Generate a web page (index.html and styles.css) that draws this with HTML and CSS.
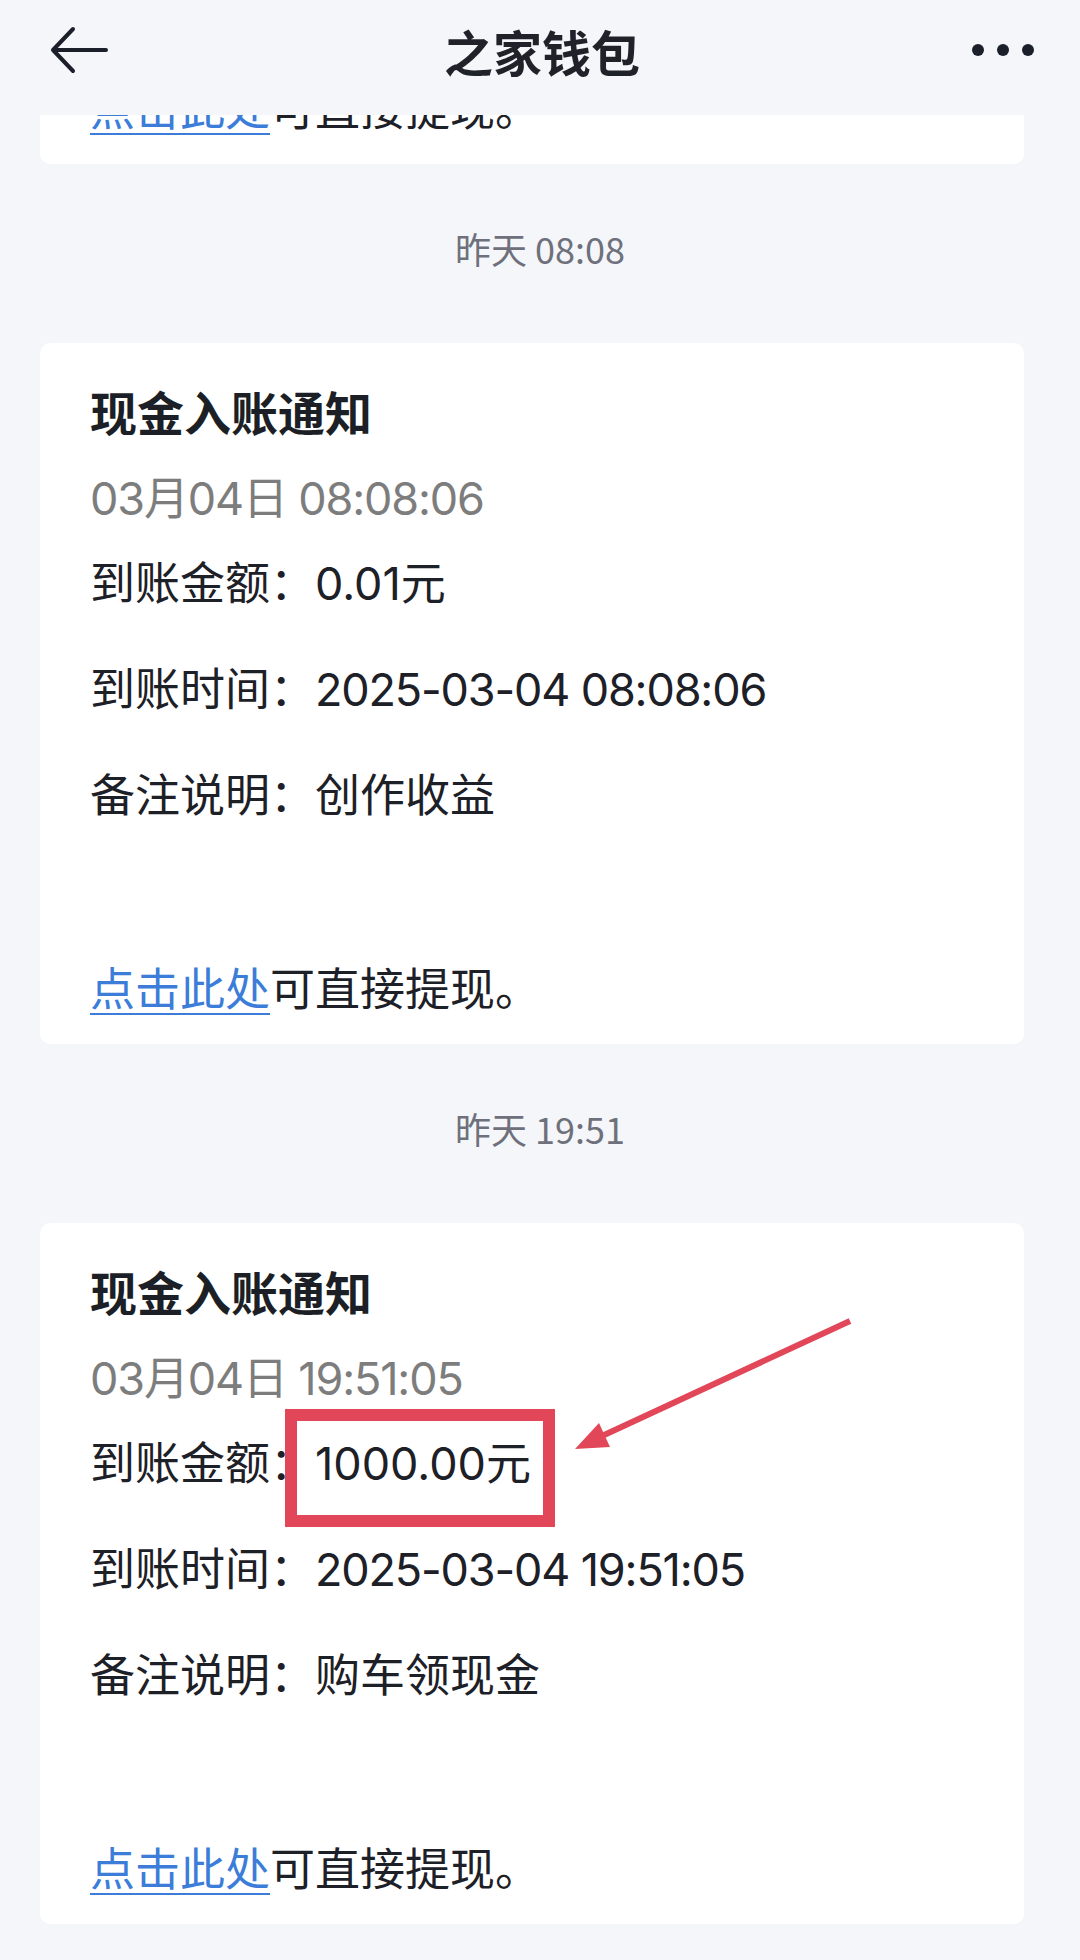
FILE: index.html
```html
<!DOCTYPE html>
<html lang="zh-CN">
<head>
  <meta charset="UTF-8" />
  <meta name="viewport" content="width=device-width, initial-scale=1.0"/>
  <title>之家钱包</title>
  <link rel="stylesheet" href="styles.css">
</head>
<body>

  <!-- Top bar -->
  <header class="topbar">
    <div class="side">
      <svg class="back" width="58" height="48" viewBox="0 0 58 48">
        <path d="M3 24 H56 M23 3 L3 24 L23 45" fill="none" stroke="#1b1f2a" stroke-width="4" stroke-linecap="round" stroke-linejoin="round"/>
      </svg>
    </div>
    <h1>之家钱包</h1>
    <div class="side right">
      <div class="more"><span></span><span></span><span></span></div>
    </div>
  </header>

  <!-- Message list -->
  <main class="feed">
    <div class="feed-inner">

      <div class="card card-cut">
        <p class="row link-row"><a href="#">点击此处</a>可直接提现。</p>
      </div>

      <div class="time">昨天 08:08</div>

      <div class="card">
        <h2>现金入账通知</h2>
        <p class="date">03月04日 08:08:06</p>
        <p class="row first">到账金额：<span class="value">0.01元</span></p>
        <p class="row">到账时间：<span class="num">2025-03-04 08:08:06</span></p>
        <p class="row">备注说明：创作收益</p>
        <p class="row link-row"><a href="#">点击此处</a>可直接提现。</p>
      </div>

      <div class="time">昨天 19:51</div>

      <div class="card marked-card">
        <h2>现金入账通知</h2>
        <p class="date">03月04日 19:51:05</p>
        <p class="row first">到账金额：<span class="value marked">1000.00元</span></p>
        <p class="row">到账时间：<span class="num">2025-03-04 19:51:05</span></p>
        <p class="row">备注说明：购车领现金</p>
        <p class="row link-row"><a href="#">点击此处</a>可直接提现。</p>

        <!-- annotation arrow -->
        <svg class="arrow" width="984" height="701" viewBox="0 0 984 701">
          <line x1="810" y1="98" x2="562" y2="213" stroke="#e24759" stroke-width="6"/>
          <polygon points="535,226 570,224 559,200" fill="#e24759"/>
        </svg>
      </div>

    </div>
  </main>

</body>
</html>
```

FILE: styles.css
```css
* {
  box-sizing: border-box;
}

body {
  margin: 0;
  width: 1080px;
  height: 1960px;
  overflow: hidden;
  background: #f5f6fa;
  font-family: Inter, "Noto Sans CJK SC", sans-serif;
  color: #1d2027;
}

.topbar {
  height: 115px;
  padding: 0 46px 15px 50px;
  display: flex;
  align-items: center;
  background: #f5f6fa;
  position: relative;
  z-index: 2;
}

.topbar .side {
  width: 140px;
  display: flex;
  align-items: center;
}

.topbar .side.right {
  justify-content: flex-end;
}

.back {
  display: block;
}

.topbar h1 {
  flex: 1;
  margin: 0;
  text-align: center;
  font-family: "Noto Sans CJK SC", sans-serif;
  font-size: 49px;
  font-weight: 700;
  color: #1f2229;
}

.more {
  display: flex;
  gap: 13px;
}

.more span {
  width: 12px;
  height: 12px;
  border-radius: 50%;
  background: #1b1f2a;
}

.feed {
  height: 1845px;
  overflow: hidden;
}

.feed-inner {
  margin-top: -35px;
}

.card {
  margin: 0 56px 0 40px;
  background: #fff;
  border-radius: 10px;
  padding: 38px 48px 24px 50px;
  position: relative;
}

.card-cut {
  padding-top: 0;
  border-radius: 0 0 10px 10px;
}

.card h2 {
  margin: 0;
  font-family: "Noto Sans CJK SC", sans-serif;
  font-size: 47px;
  font-weight: 700;
  line-height: 60px;
  color: #1c1f26;
}

.card p {
  margin: 0;
  font-size: 45px;
  line-height: 60px;
}

.card .date {
  margin-top: 28px;
  color: #7d7d7d;
  letter-spacing: -1.15px;
}

.num {
  letter-spacing: -1.15px;
}

.card .row {
  margin-top: 46px;
}

.card .row.first {
  margin-top: 25px;
}

.card .link-row {
  margin-top: 134px;
}

.card-cut .link-row {
  margin-top: 0;
}

.link-row a {
  color: #3b7dd8;
  text-decoration: underline;
  text-decoration-thickness: 2px;
  text-underline-offset: 7px;
}

.value {
  display: inline-block;
}

.marked {
  position: relative;
}

.marked::after {
  content: '';
  position: absolute;
  left: -30px;
  right: -24px;
  top: -25px;
  bottom: -33px;
  border: 12px solid #e24759;
}

.time {
  text-align: center;
  font-family: "Noto Sans CJK SC", sans-serif;
  font-size: 36px;
  line-height: 40px;
  color: #6e717b;
  margin: 64px 0 75px;
}

.arrow {
  position: absolute;
  left: 0;
  top: 0;
  pointer-events: none;
}
```
